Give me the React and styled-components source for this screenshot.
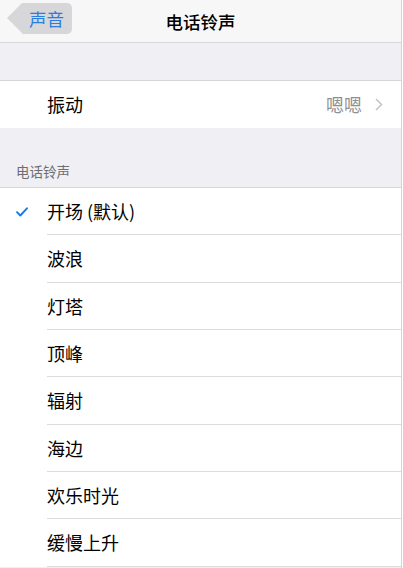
import React from "react";
import styled, { createGlobalStyle } from "styled-components";

const GlobalStyle = createGlobalStyle`
  html, body {
    margin: 0;
    padding: 0;
    background: #ffffff;
  }
  body {
    font-family: "Noto Sans CJK SC", "Noto Sans", sans-serif;
  }
`;

const Page = styled.div`
  width: 401px;
  height: 568px;
  overflow: hidden;
  border-right: 1px solid #d4d4d6;
  background: #efeff4;
`;

const NavBar = styled.div`
  position: relative;
  height: 42px;
  display: flex;
  align-items: center;
  justify-content: center;
  background: #f7f7f8;
  border-bottom: 1px solid #d6d6d9;
`;

const Title = styled.div`
  font-size: 17.5px;
  font-weight: 500;
  color: #000;
`;

const BackButton = styled.button`
  position: absolute;
  left: 22px;
  top: 3px;
  height: 31px;
  width: 50px;
  padding: 0 0 0 7px;
  border: none;
  border-radius: 0 5px 5px 0;
  background: #d7d7d9;
  color: #2b7de1;
  font-family: inherit;
  font-size: 17.5px;
  text-align: left;
  line-height: 31px;

  &::before {
    content: "";
    position: absolute;
    left: -15px;
    top: 0;
    border-right: 15px solid #d7d7d9;
    border-top: 15.5px solid transparent;
    border-bottom: 15.5px solid transparent;
  }
`;

const Gap = styled.div`
  height: ${(p) => p.h}px;
  box-sizing: border-box;
  border-bottom: 1px solid #d6d6d9;
  display: flex;
  align-items: flex-end;
`;

const SectionLabel = styled.div`
  padding: 0 0 6px 16px;
  font-size: 13.5px;
  color: #6d6d72;
`;

const Group = styled.div`
  background: #ffffff;
`;

const Row = styled.div`
  height: ${(p) => p.h}px;
  display: flex;
  align-items: center;
  box-sizing: border-box;
  background: #ffffff;
`;

const Mark = styled.div`
  width: 47px;
  flex: none;
  display: flex;
  align-items: center;
  padding-left: 16px;
  box-sizing: border-box;
`;

const RowBody = styled.div`
  flex: 1;
  height: 100%;
  display: flex;
  align-items: center;
  box-sizing: border-box;
  border-bottom: 1px solid ${(p) => (p.last ? "transparent" : "#dcdcde")};
  padding-right: 18px;
`;

const Label = styled.div`
  flex: 1;
  font-size: 18px;
  color: #000;
`;

const Detail = styled.div`
  font-size: 18px;
  color: #8e8e93;
  margin-right: 13px;
`;

const Check = () => (
  <svg width="12" height="10" viewBox="0 0 12 10">
    <path d="M1 5.2 L4.3 8.5 L11 1.3" fill="none" stroke="#1a7ae0" strokeWidth="1.9" strokeLinecap="round" strokeLinejoin="round" />
  </svg>
);

const Chevron = () => (
  <svg width="8" height="13" viewBox="0 0 8 13">
    <path d="M1 1 L6.5 6.5 L1 12" fill="none" stroke="#c4c4c8" strokeWidth="1.5" />
  </svg>
);

const tones = ["开场 (默认)", "波浪", "灯塔", "顶峰", "辐射", "海边", "欢乐时光", "缓慢上升"];

const App = () => {
  return (
    <>
      <GlobalStyle />
      <Page>
        <NavBar>
          <BackButton>声音</BackButton>
          <Title>电话铃声</Title>
        </NavBar>
        <Gap h={38} />
        <Row h={47}>
          <Mark />
          <RowBody last>
            <Label>振动</Label>
            <Detail>嗯嗯</Detail>
            <Chevron />
          </RowBody>
        </Row>
        <Gap h={60}>
          <SectionLabel>电话铃声</SectionLabel>
        </Gap>
        <Group>
          {tones.map((t, i) => (
            <Row key={t} h={47.33}>
              <Mark>{i === 0 && <Check />}</Mark>
              <RowBody>
                <Label>{t}</Label>
              </RowBody>
            </Row>
          ))}
        </Group>
      </Page>
    </>
  );
};

export default App;
